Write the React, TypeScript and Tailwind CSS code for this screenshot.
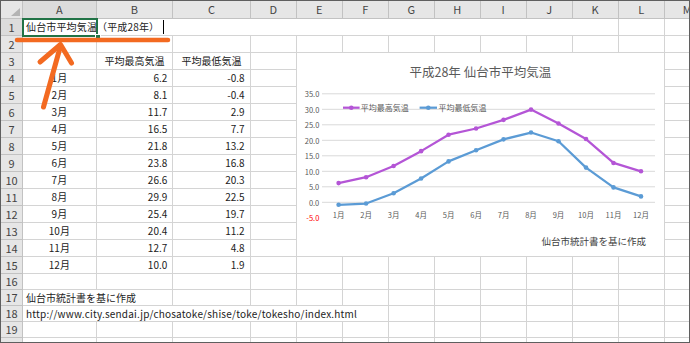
import React from "react";

const maxT = [6.2, 8.1, 11.7, 16.5, 21.8, 23.8, 26.6, 29.9, 25.4, 20.4, 12.7, 10.0];
const minT = [-0.8, -0.4, 2.9, 7.7, 13.2, 16.8, 20.3, 22.5, 19.7, 11.2, 4.8, 1.9];
const cols = ["A", "B", "C", "D", "E", "F", "G", "H", "I", "J", "K", "L", "M"];

const cellBase =
  "border-r border-b border-[#d4d4d4] flex items-center whitespace-nowrap overflow-visible text-[10px] leading-none text-[#222]";
const headBase =
  "border-r border-b border-[#c2c2c2] flex items-center justify-center text-[11px] leading-none text-[#444]";

function Empty({ n }: { n: number }) {
  return (
    <>
      {Array.from({ length: n }).map((_, i) => (
        <div key={i} className={cellBase} />
      ))}
    </>
  );
}

function RowHead({ n }: { n: number }) {
  return (
    <div className={`${headBase} ${n === 1 ? "bg-[#dcdcdc]" : "bg-[#e6e6e6]"}`}>{n}</div>
  );
}

const fx = (i: number) => 41.6 + 27.49 * i;
const fy = (v: number) => 149.3 - 3.1 * v;
const pts = (arr: number[]) => arr.map((v, i) => `${fx(i)},${fy(v)}`).join(" ");
const FONT = "'Noto Sans CJK JP', 'Noto Sans', sans-serif";

function Chart() {
  const ticks = [35, 30, 25, 20, 15, 10, 5, 0];
  return (
    <svg width="367" height="203" viewBox="0 0 367 203" fontFamily={FONT}>
      <rect x="0" y="0" width="367" height="203" fill="#ffffff" />
      <text x="183.3" y="18" textAnchor="middle" dominantBaseline="central" fontSize="12.5" fill="#595959">
        平成28年 仙台市平均気温
      </text>
      {ticks.map((v) => (
        <line key={v} x1="25" x2="358" y1={fy(v)} y2={fy(v)} stroke="#d9d9d9" strokeWidth="1" />
      ))}
      {[35, 30, 25, 20, 15, 10, 5, 0, -5].map((v) => (
        <text
          key={v}
          x="22.3"
          y={fy(v)}
          textAnchor="end"
          dominantBaseline="central"
          fontSize="7.5"
          fill={v < 0 ? "#ff0000" : "#595959"}
        >
          {v.toFixed(1)}
        </text>
      ))}
      {maxT.map((_, i) => (
        <text key={i} x={fx(i)} y="161.3" textAnchor="middle" dominantBaseline="central" fontSize="7.5" fill="#595959">
          {i + 1}月
        </text>
      ))}
      <polyline points={pts(maxT)} fill="none" stroke="#b455d6" strokeWidth="2.25" strokeLinejoin="round" />
      {maxT.map((v, i) => (
        <circle key={i} cx={fx(i)} cy={fy(v)} r="2.3" fill="#b455d6" />
      ))}
      <polyline points={pts(minT)} fill="none" stroke="#5b9bd5" strokeWidth="2.25" strokeLinejoin="round" />
      {minT.map((v, i) => (
        <circle key={i} cx={fx(i)} cy={fy(v)} r="2.3" fill="#5b9bd5" />
      ))}
      {/* legend */}
      <line x1="46" x2="62.6" y1="54.7" y2="54.7" stroke="#b455d6" strokeWidth="2.25" />
      <circle cx="54.3" cy="54.7" r="2.3" fill="#b455d6" />
      <text x="63.8" y="54.7" dominantBaseline="central" fontSize="8" fill="#595959">
        平均最高気温
      </text>
      <line x1="122.6" x2="140" y1="54.7" y2="54.7" stroke="#5b9bd5" strokeWidth="2.25" />
      <circle cx="131.3" cy="54.7" r="2.3" fill="#5b9bd5" />
      <text x="141.6" y="54.7" dominantBaseline="central" fontSize="8" fill="#595959">
        平均最低気温
      </text>
      <text x="349" y="188" textAnchor="end" dominantBaseline="central" fontSize="9.5" fill="#404040">
        仙台市統計書を基に作成
      </text>
    </svg>
  );
}

export default function App() {
  return (
    <div className="relative w-[690px] h-[343px] overflow-hidden border border-[#5f5f5f] bg-white font-['Noto_Sans_CJK_JP','Noto_Sans',sans-serif]">
      <div className="grid w-max grid-cols-[22px_73.7px_76.6px_77.4px_repeat(10,46px)] grid-rows-[18px_repeat(15,17px)_repeat(5,16px)]">
        {/* header row */}
        <div className="relative bg-[#e6e6e6] border-r border-b border-[#c2c2c2]">
          <svg className="absolute right-[2px] bottom-[2px]" width="9" height="8" viewBox="0 0 9 8">
            <polygon points="9,0 9,8 0,8" fill="#b4b4b4" />
          </svg>
        </div>
        {cols.map((c) => (
          <div key={c} className={`${headBase} ${c === "A" ? "bg-[#dcdcdc]" : "bg-[#e6e6e6]"}`}>
            {c}
          </div>
        ))}

        {/* row 1 */}
        <RowHead n={1} />
        <div className={`${cellBase} col-span-11 pl-[3px]`}>
          <span className="tracking-[0.15px]">仙台市平均気温（平成28年）</span>
          <span className="inline-block w-px h-[14px] bg-black ml-[4px]" />
        </div>
        <Empty n={2} />

        {/* row 2 */}
        <RowHead n={2} />
        <Empty n={13} />

        {/* row 3 */}
        <RowHead n={3} />
        <div className={cellBase} />
        <div className={`${cellBase} justify-center`}>平均最高気温</div>
        <div className={`${cellBase} justify-center`}>平均最低気温</div>
        <Empty n={10} />

        {maxT.map((v, i) => (
          <React.Fragment key={i}>
            <RowHead n={i + 4} />
            <div className={`${cellBase} justify-center`}>{i + 1}月</div>
            <div className={`${cellBase} justify-end pr-[5px]`}>{v.toFixed(1)}</div>
            <div className={`${cellBase} justify-end pr-[5px]`}>{minT[i].toFixed(1)}</div>
            <Empty n={10} />
          </React.Fragment>
        ))}

        {/* row 16 */}
        <RowHead n={16} />
        <Empty n={13} />

        {/* row 17 */}
        <RowHead n={17} />
        <div className={`${cellBase} col-span-2 pl-[3px]`}>仙台市統計書を基に作成</div>
        <Empty n={11} />

        {/* row 18 */}
        <RowHead n={18} />
        <div className={`${cellBase} col-span-6 pl-[3px] tracking-[0.2px]`}>
          http://www.city.sendai.jp/chosatoke/shise/toke/tokesho/index.html
        </div>
        <Empty n={7} />

        {/* rows 19, 20 */}
        <RowHead n={19} />
        <Empty n={13} />
        <RowHead n={20} />
        <Empty n={13} />
      </div>

      {/* chart object */}
      <div className="absolute left-[295.7px] top-[52px] w-[367px] h-[203px] bg-white">
        <Chart />
      </div>

      {/* active cell selection */}
      <div className="absolute left-[21px] top-[17px] w-[76px] h-[19px] border-2 border-[#217346]" />
      <div className="absolute left-[94px] top-[33px] w-[6px] h-[6px] bg-[#217346] border border-white" />

      {/* orange annotation */}
      <svg className="absolute left-[-1px] top-[-1px] pointer-events-none" width="200" height="120" viewBox="0 0 200 120">
        <line x1="17" y1="40" x2="168" y2="40" stroke="#f36a21" strokeWidth="4.5" strokeLinecap="round" />
        <line x1="43.5" y1="107" x2="60.5" y2="46" stroke="#f36a21" strokeWidth="5" strokeLinecap="round" />
        <polyline
          points="40,62 60.5,44.5 71.5,63"
          fill="none"
          stroke="#f36a21"
          strokeWidth="5"
          strokeLinecap="round"
          strokeLinejoin="round"
        />
      </svg>
    </div>
  );
}
